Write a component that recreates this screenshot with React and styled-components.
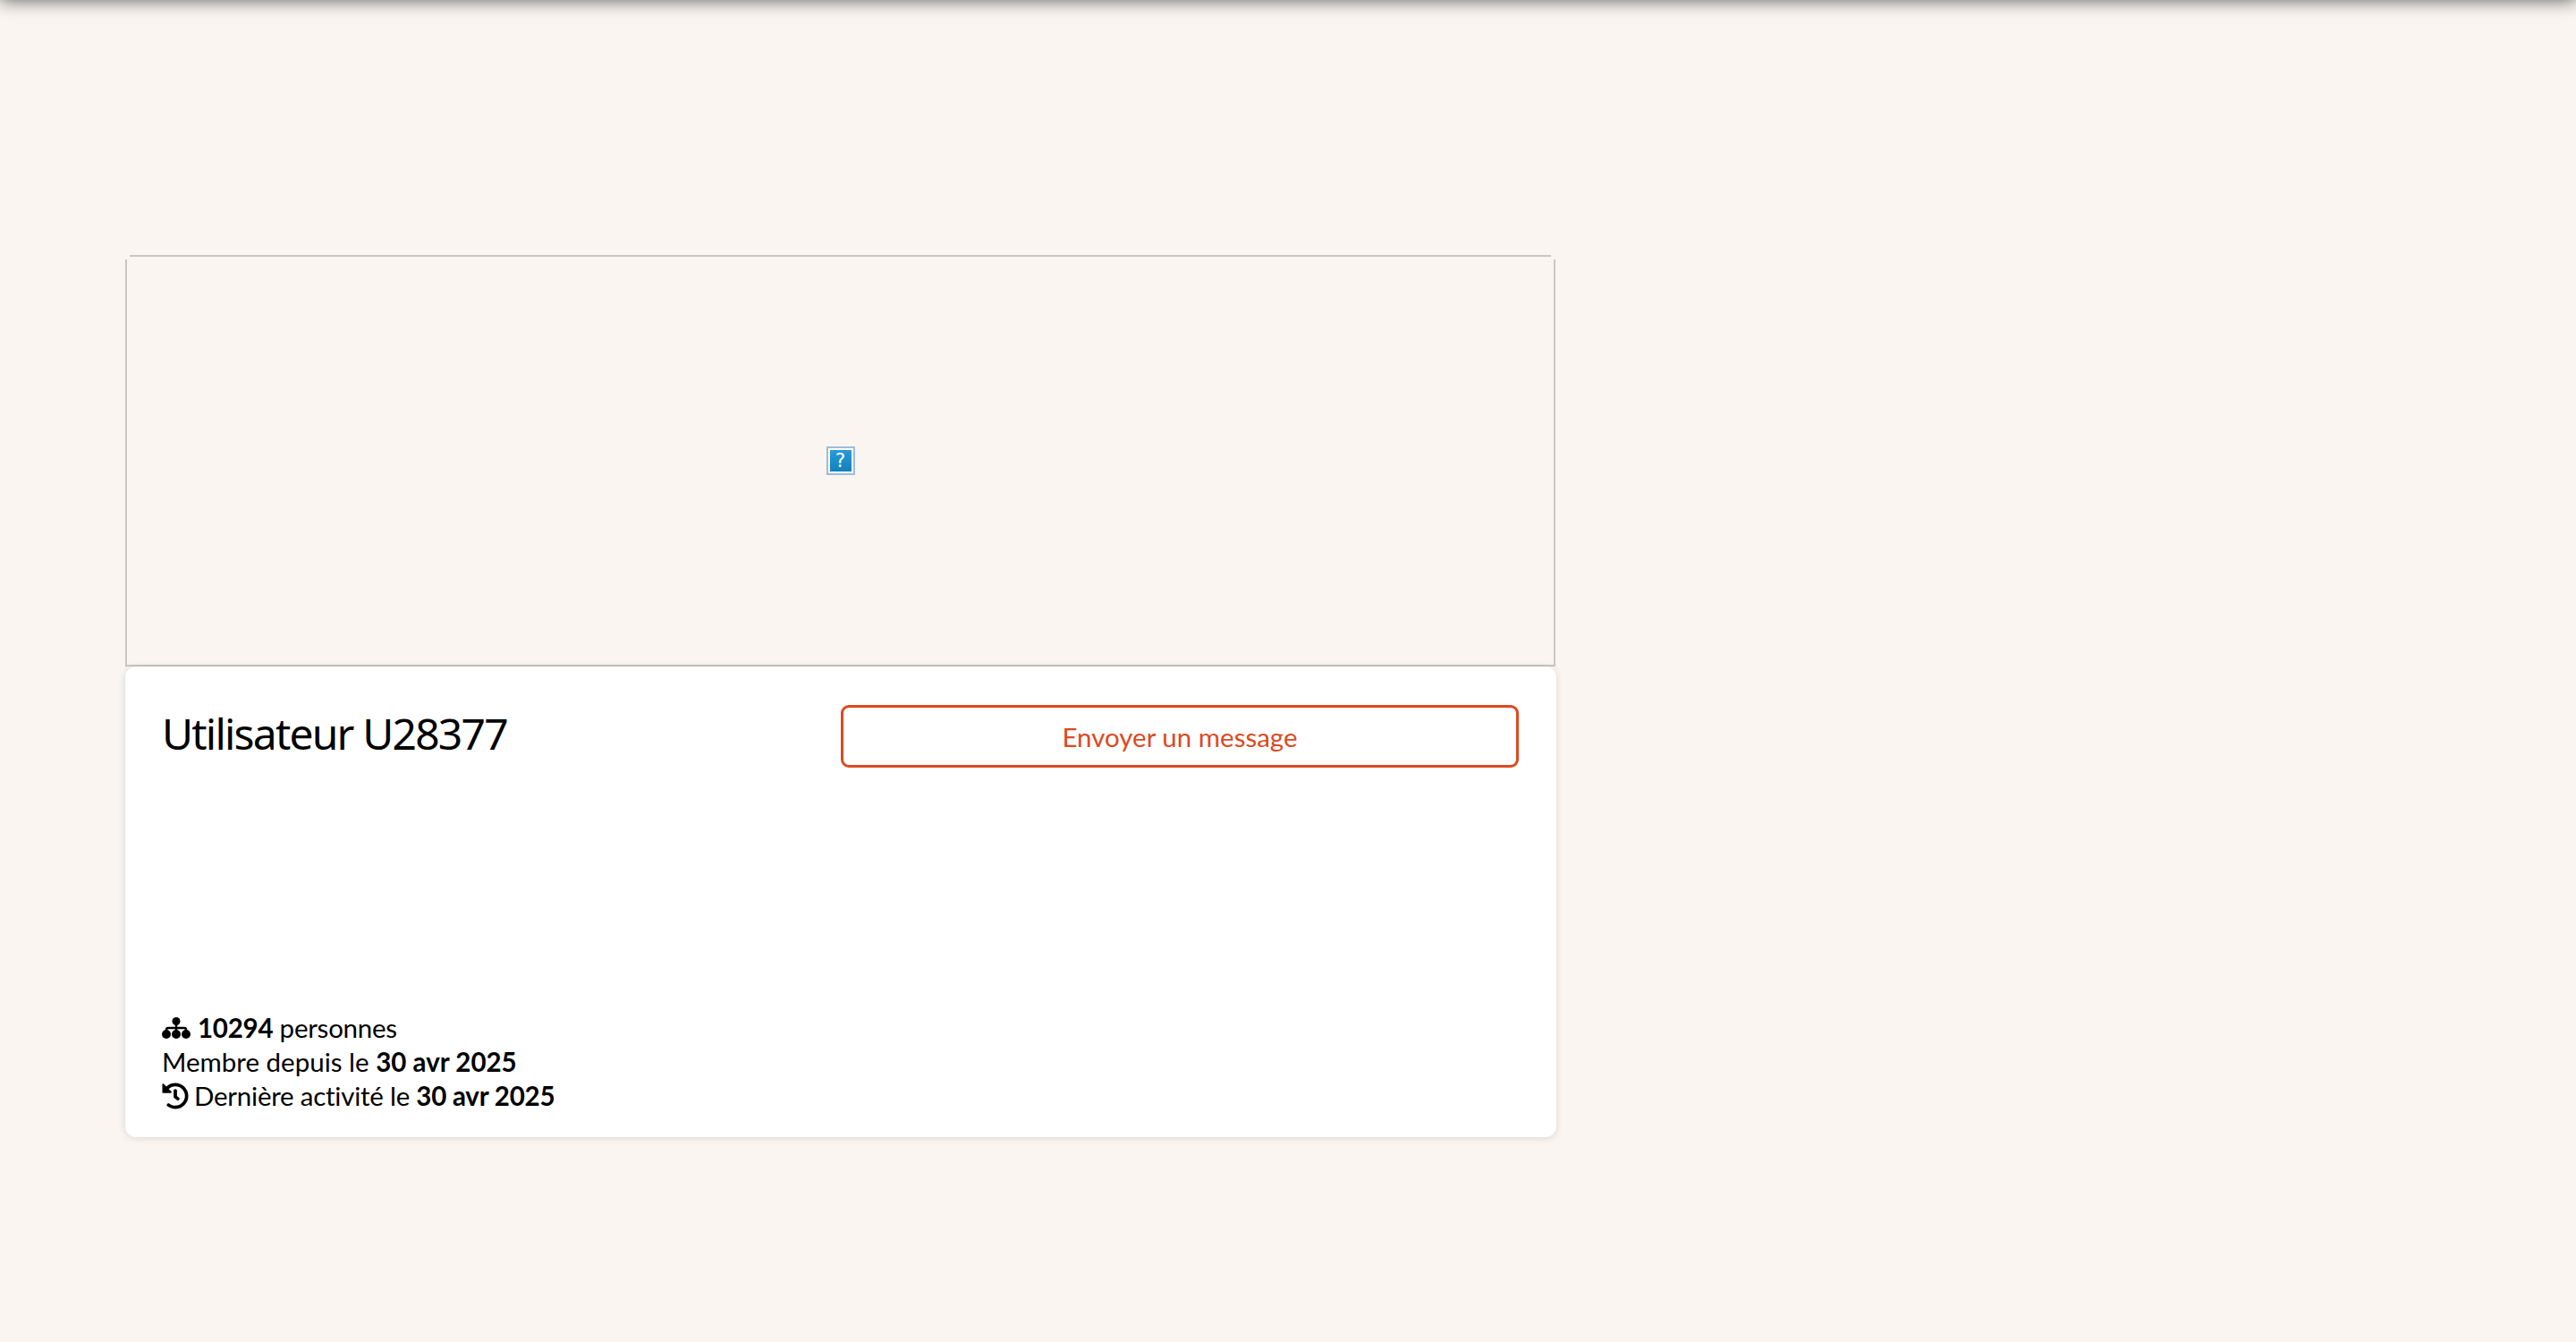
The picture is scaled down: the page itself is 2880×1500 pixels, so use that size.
import React from "react";
import styled, { createGlobalStyle } from "styled-components";
import { FaHistory } from "react-icons/fa";

const GlobalStyle = createGlobalStyle`
  html, body {
    margin: 0;
    padding: 0;
    background: #faf5f1;
    font-family: "Lato", "Noto Sans", sans-serif;
    color: #000;
    overflow: hidden;
  }
`;

const Page = styled.div`
  min-height: 1500px;
  box-sizing: border-box;
`;

const TopBar = styled.header`
  height: 60px;
  margin-top: -60px;
  box-shadow: 0 0 20px rgba(0, 0, 0, 0.65);
`;

const Content = styled.main`
  width: 1600px;
  margin-left: 140px;
  padding-top: 285px;
`;

const lineColor = "#c9c6c3";

// the border stops short of the two top corners, so it is painted as four strips
const Cover = styled.div`
  height: 460px;
  box-sizing: border-box;
  margin-right: 1px;
  background:
    linear-gradient(${lineColor}, ${lineColor}) 5px 0 / calc(100% - 10px) 2px no-repeat,
    linear-gradient(${lineColor}, ${lineColor}) 0 5px / 2px 100% no-repeat,
    linear-gradient(${lineColor}, ${lineColor}) 100% 5px / 2px 100% no-repeat,
    linear-gradient(${lineColor}, ${lineColor}) 0 100% / 100% 2px no-repeat;
  display: flex;
  align-items: flex-start;
  justify-content: center;
  padding-top: 214px;
`;

const BrokenImage = styled.div`
  width: 32px;
  height: 32px;
  box-sizing: border-box;
  border: 2px solid #9dbcda;
  padding: 2px;
  background: #fff;
  display: flex;
`;

const BrokenGlyph = styled.span`
  flex: 1;
  display: flex;
  align-items: center;
  justify-content: center;
  background: linear-gradient(#2b9bd6, #1280bd);
  color: #fff;
  font: 400 21px "DejaVu Sans", sans-serif;
`;

const Card = styled.section`
  height: 526px;
  box-sizing: border-box;
  padding: 43px 42px 27px 41px;
  background: #fff;
  border-radius: 12px;
  box-shadow: 0 1px 8px rgba(0, 0, 0, 0.13);
  display: flex;
  flex-direction: column;
  justify-content: space-between;
`;

const CardHead = styled.div`
  display: flex;
  justify-content: space-between;
  align-items: flex-start;
`;

const Title = styled.h1`
  margin: 0;
  font-family: "Noto Sans", sans-serif;
  font-size: 48px;
  font-weight: 400;
  line-height: 64px;
  letter-spacing: -1.8px;
`;

const MessageButton = styled.button`
  width: 758px;
  height: 70px;
  box-sizing: border-box;
  background: #fff;
  border: 3px solid #dc4a1f;
  border-radius: 9px;
  color: #dc4a1f;
  font-family: "Lato", sans-serif;
  font-size: 29.5px;
`;

const Stats = styled.div`
  font-size: 29.5px;
  line-height: 38px;
  font-variant-ligatures: none;
`;

const StatRow = styled.div`
  display: flex;
  align-items: center;
  gap: ${(p) => p.$gap || 0}px;
  letter-spacing: ${(p) => p.$tracking || 0}px;
  white-space: pre;
  svg {
    flex: none;
  }
`;

const HistoryIcon = styled(FaHistory)`
  font-size: 30px;
`;

const Strong = styled.b`
  font-weight: 700;
`;

function SitemapIcon() {
  return (
    <svg width="32" height="24" viewBox="0 0 32 24">
      <circle cx="16" cy="4.5" r="4.5" fill="#000" />
      <path
        d="M5 17v-3a2 2 0 0 1 2-2h18a2 2 0 0 1 2 2v3M16 6v11"
        fill="none"
        stroke="#000"
        strokeWidth="2.4"
      />
      <circle cx="5" cy="19" r="5" fill="#000" />
      <circle cx="16" cy="19" r="5" fill="#000" />
      <circle cx="27" cy="19" r="5" fill="#000" />
    </svg>
  );
}

export default function App() {
  return (
    <Page>
      <GlobalStyle />
      <TopBar />
      <Content>
        <Cover>
          <BrokenImage>
            <BrokenGlyph>?</BrokenGlyph>
          </BrokenImage>
        </Cover>
        <Card>
          <CardHead>
            <Title>Utilisateur U28377</Title>
            <MessageButton>Envoyer un message</MessageButton>
          </CardHead>
          <Stats>
            <StatRow $gap={8} $tracking={-0.25}>
              <SitemapIcon />
              <span>
                <Strong>10294</Strong> personnes
              </span>
            </StatRow>
            <StatRow>
              <span>
                Membre depuis le <Strong>30 avr 2025</Strong>
              </span>
            </StatRow>
            <StatRow $gap={6} $tracking={-0.24}>
              <HistoryIcon />
              <span>
                Dernière activité le <Strong>30 avr 2025</Strong>
              </span>
            </StatRow>
          </Stats>
        </Card>
      </Content>
    </Page>
  );
}
